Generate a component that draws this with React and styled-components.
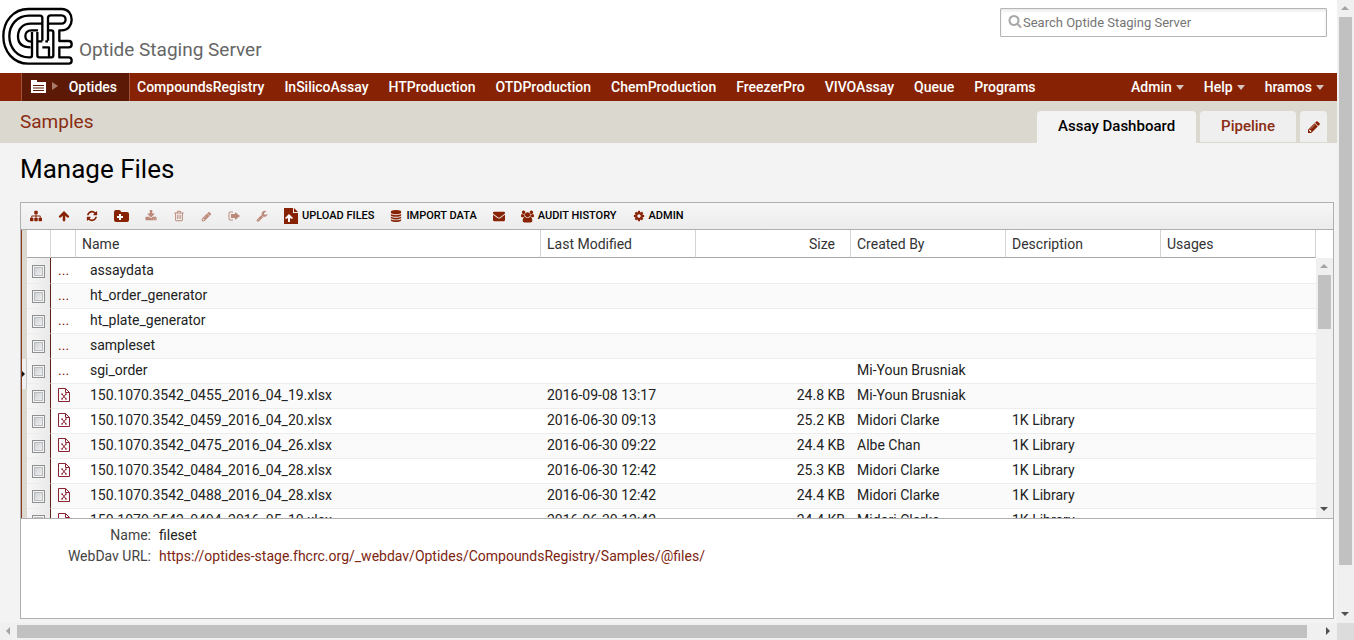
import React from "react";
import styled, { createGlobalStyle } from "styled-components";

const brand = "#872304";
const line = "#b0b0b0";

const GlobalStyle = createGlobalStyle`
  * { box-sizing: border-box; }
  body { margin: 0; font: 14px/20px Roboto, "Liberation Sans", sans-serif; color: #222; background: #f3f3f3; }
  button, input { font: inherit; }
  a { text-decoration: none; }
`;

const Window = styled.div`
  display: grid;
  grid-template-columns: minmax(0, 1fr) 17px;
  grid-template-rows: minmax(0, 1fr) 17px;
  height: 100vh;
`;
const Page = styled.div`
  display: flex;
  flex-direction: column;
  min-width: 0;
  overflow: hidden;
`;

/* Scroll bars */
const Scroll = styled.div`
  display: flex;
  flex-direction: ${p => (p.$across ? "row" : "column")};
  background: #f0f0f0;
  min-height: 0;
`;
const ScrollArrow = styled.span`
  flex: 0 0 17px;
  display: grid;
  place-items: center;
  color: ${p => (p.$dim ? "#a3a3a3" : "#505050")};
`;
const Track = styled.div`
  flex: 1;
  display: flex;
  flex-direction: ${p => (p.$across ? "row" : "column")};
  padding: ${p => (p.$across ? "2px 0" : "0 2px")};
  min-height: 0;
`;
const Thumb = styled.div`
  flex: 0 0 ${p => p.$size};
  background: #c1c1c1;
`;
const Corner = styled.div`
  background: #dcdcdc;
`;

/* Masthead */
const Masthead = styled.header`
  display: flex;
  flex: 0 0 73px;
  justify-content: space-between;
  background: #fff;
  padding: 4px 10px 0 0;
`;
const HomeLink = styled.a`
  display: flex;
  gap: 1px;
  color: #666;
  font-size: 19px;
  line-height: 24px;
`;
const HomeName = styled.span`
  padding-top: 34px;
`;
const SearchBox = styled.label`
  display: flex;
  align-items: center;
  width: 327px;
  height: 29px;
  margin-top: 4px;
  padding-left: 7px;
  gap: 1px;
  border: 1px solid #b5b5b5;
  border-radius: 1px;
  box-shadow: inset 0 2px 3px #e9e9e9;
  color: #a8a8a8;
  svg { flex: none; margin-bottom: 3px; }
`;
const SearchInput = styled.input`
  flex: 1;
  min-width: 0;
  border: 0;
  padding: 0;
  outline: 0;
  background: none;
  font-size: 13px;
  &::placeholder { color: #757575; opacity: 1; }
`;

/* Menu bar */
const MenuBar = styled.nav`
  display: flex;
  flex: 0 0 28px;
  background: ${brand};
  padding: 0 3px 0 21px;
`;
const Project = styled.a`
  display: flex;
  align-items: center;
  width: 109px;
  padding: 0 12px 0 9px;
  background: #5c1a06;
  border: solid #a0543c;
  border-width: 0 1px;
  color: #fff;
  font-weight: 500;
  svg { flex: none; margin-right: 6px; margin-bottom: 2px; }
  svg + svg { color: #a97b6c; margin-right: 0; }
  span { margin-left: auto; }
`;
const MenuLink = styled.a`
  padding: 4px 10px;
  color: #fff;
  font-weight: 500;
  white-space: nowrap;
`;
const MenuGroup = styled.div`
  display: flex;
  flex: 1;
  margin-left: -3px;
`;
const UserGroup = styled.div`
  display: flex;
`;
const Caret = styled.span`
  display: inline-block;
  margin-left: 4px;
  vertical-align: 2px;
  border: 4px solid transparent;
  border-top: 5px solid #d6c5c0;
  border-bottom: 0;
`;

/* Folder bar */
const FolderBar = styled.div`
  display: flex;
  flex: 0 0 42px;
  justify-content: space-between;
  background: #dbd8d0;
  padding: 0 10px 0 20px;
`;
const FolderLink = styled.a`
  padding-top: 11px;
  color: #892c12;
  font-size: 19px;
`;
const Tabs = styled.div`
  display: flex;
  align-items: flex-end;
  gap: 4px;
`;
const Tab = styled.a`
  height: ${p => (p.$on ? 32 : 31)}px;
  padding: 5px 21px;
  margin-bottom: ${p => (p.$on ? 0 : 1)}px;
  border-radius: 4px 4px 0 0;
  background: ${p => (p.$on ? "#f3f3f3" : "#efefef")};
  color: ${p => (p.$on ? "#000" : "#892c12")};
  font-size: 15px;
  font-weight: 500;
`;
const EditTab = styled.button`
  height: 31px;
  width: 27px;
  margin-bottom: 1px;
  padding: 0;
  border: 0;
  border-radius: 4px 4px 0 0;
  background: #efefef;
  color: ${brand};
  display: grid;
  place-items: center;
`;

/* File browser */
const Title = styled.h1`
  margin: 0;
  padding: 10px 20px 0;
  flex: 0 0 59px;
  font-size: 26px;
  line-height: 32px;
  font-weight: 400;
  color: #000;
`;
const Panel = styled.main`
  display: flex;
  flex: 1;
  flex-direction: column;
  min-height: 0;
  margin: 0 3px 4px 20px;
  border: 1px solid ${line};
  background: #fff;
`;
const Toolbar = styled.div`
  display: flex;
  flex: 0 0 27px;
  padding-left: 1px;
  border-bottom: 1px solid ${line};
  background: linear-gradient(#f6f6f6, #ececec);
`;
const Tool = styled.button`
  display: flex;
  align-items: center;
  gap: 4px;
  padding: 0 8px;
  border: 0;
  background: none;
  color: ${brand};
  opacity: ${p => (p.disabled ? 0.5 : 1)};
  svg { flex: none; }
`;
const ToolText = styled.span`
  color: #000;
  font-size: 11px;
  font-weight: 500;
  text-transform: uppercase;
  white-space: nowrap;
`;
const Browser = styled.div`
  display: grid;
  grid-template-columns: 6px minmax(0, 1fr) 17px;
  flex: 1;
  min-height: 0;
  overflow: hidden;
`;
const Splitter = styled.div`
  display: flex;
  align-items: center;
  background: #dbd8d0;
  border-left: 1px solid #8c3b21;
`;
const Expand = styled.button`
  width: 5px;
  height: 30px;
  padding: 0;
  border: 1px solid #c9c7c3;
  border-width: 0 1px 0 0;
  background: #f0f0f0;
  color: #111;
  display: grid;
  place-items: center;
`;
const GridClip = styled.div`
  overflow: hidden;
`;
const GridScroll = styled.div`
  display: grid;
  grid-template-rows: 28px minmax(0, 1fr);
`;
const Files = styled.table`
  width: 100%;
  table-layout: fixed;
  border-collapse: separate;
  border-spacing: 0;
`;
const Col = styled.col`
  width: ${p => p.$w};
`;
const Head = styled.th`
  height: 28px;
  padding: 0 ${p => (p.$right ? 15 : 6)}px 0 6px;
  border-right: 1px solid #d5d5d5;
  border-bottom: 1px solid #a8a8a8;
  font-weight: 400;
  text-align: ${p => (p.$right ? "right" : "left")};
  color: #333;
`;
const Row = styled.tr`
  background: ${p => (p.$alt ? "#fafafa" : "#fff")};
`;
const Cell = styled.td`
  height: 25px;
  padding: 1px 6px 0;
  border-bottom: 1px solid #ededed;
  white-space: nowrap;
  vertical-align: top;
  text-align: ${p => (p.$right ? "right" : "left")};
  tr:first-child > & { height: 26px; padding-top: 2px; }
`;
const NameCell = styled(Cell)`
  padding-left: 14px;
`;
const KindCell = styled(Cell)`
  padding-left: 7px;
  color: ${brand};
  svg { display: block; margin-top: 3px; }
`;
const CheckCell = styled(Cell)`
  padding-left: 5px;
  padding-right: 0;
  border-right: 1px solid #5b2416;
  background: linear-gradient(90deg, #f7f7f7, #e9e9e9);
`;
const Check = styled.input`
  appearance: none;
  display: block;
  width: 13px;
  height: 13px;
  margin: 5px 0 0;
  border: 1px solid #8e8f8f;
  background: linear-gradient(135deg, #c6cace, #f6f6f6);
  box-shadow: inset 0 0 0 1px #f4f4f4, inset 0 0 0 2px #b9bcc0;
`;
const Details = styled.dl`
  display: grid;
  grid-template-columns: 130px 1fr;
  grid-auto-rows: 21px;
  column-gap: 8px;
  flex: 0 0 100px;
  margin: 0;
  padding-top: 6px;
  border-top: 1px solid ${line};
`;
const Term = styled.dt`
  text-align: right;
  color: #444;
`;
const Value = styled.dd`
  margin: 0;
  a { color: #7d2410; }
`;

/* Icons */
const paths = {
  arrowUp: "M1675 971q0 51-37 90l-75 75q-38 38-91 38-54 0-90-38l-294-293v704q0 52-37.5 84.5t-90.5 32.5h-128q-53 0-90.5-32.5t-37.5-84.5v-704l-294 293q-36 38-90 38t-90-38l-75-75q-38-38-38-90 0-53 38-91l651-651q35-37 90-37 54 0 91 37l651 651q37 39 37 91z",
  refresh: "M1639 1056q0 5-1 7-64 268-268 434.5t-478 166.5q-146 0-282.5-55t-243.5-157l-129 129q-19 19-45 19t-45-19-19-45v-448q0-26 19-45t45-19h448q26 0 45 19t19 45-19 45l-137 137q71 66 161 102t187 36q134 0 250-65t186-179q11-17 53-117 8-23 30-23h192q13 0 22.5 9.5t9.5 22.5zm25-800v448q0 26-19 45t-45 19h-448q-26 0-45-19t-19-45 19-45l138-138q-148-137-349-137-134 0-250 65t-186 179q-11 17-53 117-8 23-30 23h-199q-13 0-22.5-9.5t-9.5-22.5v-7q65-268 270-434.5t480-166.5q146 0 284 55.5t245 156.5l130-129q19-19 45-19t45 19 19 45z",
  search: "M1216 832q0-185-131.5-316.5t-316.5-131.5-316.5 131.5-131.5 316.5 131.5 316.5 316.5 131.5 316.5-131.5 131.5-316.5zm512 832q0 52-38 90t-90 38q-54 0-90-38l-343-342q-179 124-399 124-143 0-273.5-55.5t-225-150-150-225-55.5-273.5 55.5-273.5 150-225 225-150 273.5-55.5 273.5 55.5 225 150 150 225 55.5 273.5q0 220-124 399l343 343q37 37 37 90z",
  pencil: "M491 1536l91-91-235-235-91 91v107h128v128h107zm523-928q0-22-22-22-10 0-17 7l-542 542q-7 7-7 17 0 22 22 22 10 0 17-7l542-542q7-7 7-17zm-54-192l416 416-832 832h-416v-416zm683 96q0 53-37 90l-166 166-416-416 166-165q36-38 90-38 53 0 91 38l235 234q37 39 37 91z",
  envelope: "M1792 710v794q0 66-47 113t-113 47h-1472q-66 0-113-47t-47-113v-794q44 49 101 87 362 246 497 345 57 42 92.5 65.5t94.5 48 110 24.5h2q51 0 110-24.5t94.5-48 92.5-65.5q170-123 498-345 57-39 100-87zm0-294q0 79-49 151t-122 123q-376 261-468 325-10 7-42.5 31t-54 38.5-52 32.5-57.5 27-50 9h-2q-23 0-50-9t-57.5-27-52-32.5-54-38.5-42.5-31q-91-64-262-182.5t-205-142.5q-62-42-117-115.5t-55-136.5q0-78 41.5-130t118.5-52h1472q65 0 112.5 47t47.5 113z",
  download: "M1344 1344q0-26-19-45t-45-19-45 19-19 45 19 45 45 19 45-19 19-45zm256 0q0-26-19-45t-45-19-45 19-19 45 19 45 45 19 45-19 19-45zm128-224v320q0 40-28 68t-68 28h-1472q-40 0-68-28t-28-68v-320q0-40 28-68t68-28h465l135 136q58 56 136 56t136-56l136-136h464q40 0 68 28t28 68zm-325-569q17 41-14 70l-448 448q-18 19-45 19t-45-19l-448-448q-31-29-14-70 17-39 59-39h256v-448q0-26 19-45t45-19h256q26 0 45 19t19 45v448h256q42 0 59 39z",
  trash: "M704 736v576q0 14-9 23t-23 9h-64q-14 0-23-9t-9-23v-576q0-14 9-23t23-9h64q14 0 23 9t9 23zm256 0v576q0 14-9 23t-23 9h-64q-14 0-23-9t-9-23v-576q0-14 9-23t23-9h64q14 0 23 9t9 23zm256 0v576q0 14-9 23t-23 9h-64q-14 0-23-9t-9-23v-576q0-14 9-23t23-9h64q14 0 23 9t9 23zm128 724v-948h-896v948q0 22 7 40.5t14.5 27 10.5 8.5h832q3 0 10.5-8.5t14.5-27 7-40.5zm-672-1076h448l-48-117q-7-9-17-11h-317q-10 2-17 11zm928 32v64q0 14-9 23t-23 9h-96v948q0 83-47 143.5t-113 60.5h-832q-66 0-113-58.5t-47-141.5v-952h-96q-14 0-23-9t-9-23v-64q0-14 9-23t23-9h309l70-167q15-37 54-63t79-26h320q40 0 79 26t54 63l70 167h309q14 0 23 9t9 23z",
  sitemap: "M1792 1248v320q0 40-28 68t-68 28h-320q-40 0-68-28t-28-68v-320q0-40 28-68t68-28h96v-192h-512v192h96q40 0 68 28t28 68v320q0 40-28 68t-68 28h-320q-40 0-68-28t-28-68v-320q0-40 28-68t68-28h96v-192h-512v192h96q40 0 68 28t28 68v320q0 40-28 68t-68 28h-320q-40 0-68-28t-28-68v-320q0-40 28-68t68-28h96v-192q0-52 38-90t90-38h512v-192h-96q-40 0-68-28t-28-68v-320q0-40 28-68t68-28h320q40 0 68 28t28 68v320q0 40-28 68t-68 28h-96v192h512q52 0 90 38t38 90v192h96q40 0 68 28t28 68z",
  wrench: "M448 1472q0-26-19-45t-45-19-45 19-19 45 19 45 45 19 45-19 19-45zm644-420l-682 682q-37 37-90 37-52 0-91-37l-106-108q-38-36-38-90 0-53 38-91l681-681q39 98 114.5 173.5t173.5 114.5zm634-435q0 39-23 106-47 134-164.5 217.5t-258.5 83.5q-185 0-316.5-131.5t-131.5-316.5 131.5-316.5 316.5-131.5q58 0 121.5 16.5t107.5 46.5q16 11 16 28t-16 28l-293 169v224l193 107q5-3 79-48.5t135.5-81 70.5-35.5q15 0 23.5 10t8.5 25z",
  cog: "M1152 896q0-106-75-181t-181-75-181 75-75 181 75 181 181 75 181-75 75-181zm512-109v222q0 12-8 23t-20 13l-185 28q-19 54-39 91 35 50 107 138 10 12 10 25t-9 23q-27 37-99 108t-94 71q-12 0-26-9l-138-108q-44 23-91 38-16 136-29 186-7 28-36 28h-222q-14 0-24.5-8.5t-11.5-21.5l-28-184q-49-16-90-37l-141 107q-10 9-25 9-14 0-25-11-126-114-165-168-7-10-7-23 0-12 8-23 15-21 51-66.5t54-70.5q-27-50-41-99l-183-27q-13-2-21-12.5t-8-23.5v-222q0-12 8-23t19-13l186-28q14-46 39-92-40-57-107-138-10-12-10-24 0-10 9-23 26-36 98.5-107.5t94.5-71.5q13 0 26 10l138 107q44-23 91-38 16-136 29-186 7-28 36-28h222q14 0 24.5 8.5t11.5 21.5l28 184q49 16 90 37l142-107q9-9 24-9 13 0 25 10 129 119 165 170 7 8 7 22 0 12-8 23-15 21-51 66.5t-54 70.5q26 50 41 98l183 28q13 2 21 12.5t8 23.5z",
  database: "M896 768q237 0 443-43t325-127v170q0 69-103 128t-280 93.5-385 34.5-385-34.5-280-93.5-103-128v-170q119 84 325 127t443 43zm0 768q237 0 443-43t325-127v170q0 69-103 128t-280 93.5-385 34.5-385-34.5-280-93.5-103-128v-170q119 84 325 127t443 43zm0-384q237 0 443-43t325-127v170q0 69-103 128t-280 93.5-385 34.5-385-34.5-280-93.5-103-128v-170q119 84 325 127t443 43zm0-1152q208 0 385 34.5t280 93.5 103 128v128q0 69-103 128t-280 93.5-385 34.5-385-34.5-280-93.5-103-128v-128q0-69 103-128t280-93.5 385-34.5z",
  users: "M593 896q-162 5-265 128h-134q-82 0-138-40.5t-56-118.5q0-353 124-353 6 0 43.5 21t97.5 42.5 119 21.5q67 0 133-23-5 37-5 66 0 139 81 256zm1071 637q0 120-73 189.5t-194 69.5h-874q-121 0-194-69.5t-73-189.5q0-53 3.5-103.5t14-109 26.5-108.5 43-97.5 62-81 85.5-53.5 111.5-20q10 0 43 21.5t73 48 107 48 135 21.5 135-21.5 107-48 73-48 43-21.5q61 0 111.5 20t85.5 53.5 62 81 43 97.5 26.5 108.5 14 109 3.500 103.500zm-1024-1277q0 106-75 181t-181 75-181-75-75-181 75-181 181-75 181 75 75 181zm704 384q0 159-112.5 271.5t-271.5 112.5-271.5-112.5-112.5-271.5 112.5-271.5 271.5-112.5 271.5 112.5 112.5 271.5zm576 225q0 78-56 118.5t-138 40.5h-134q-103-123-265-128 81-117 81-256 0-29-5-66 66 23 133 23 59 0 119-21.5t97.5-42.5 43.5-21q124 0 124 353zm-128-609q0 106-75 181t-181 75-181-75-75-181 75-181 181-75 181 75 75 181z",
};
const Glyph = ({ name, size = 12, box = 1792 }) => (
  <svg width={size} height={size} viewBox={`0 0 ${box} 1792`} fill="currentColor" aria-hidden="true">
    <path d={paths[name]} />
  </svg>
);
const Triangle = ({ dir }) => {
  const d = { up: "M3 9 7 5l4 4z", down: "M3 5h8L7 9z", left: "M9 3v8L5 7z", right: "M5 3v8l4-4z" }[dir];
  return <svg width="15" height="15" viewBox="0 0 15 15" fill="currentColor" aria-hidden="true"><path d={d} /></svg>;
};
const FolderPlus = () => (
  <svg width="15" height="12" viewBox="0 0 15 12" aria-hidden="true">
    <path fill="currentColor" d="M0 2q0-2 2-2h3q2 0 2 2h6q2 0 2 2v6q0 2-2 2H2q-2 0-2-2z" />
    <path fill="#fff" d="M5 4h2v2h2v2H7v2H5V8H3V6h2z" />
  </svg>
);
const ExportIcon = () => (
  <svg width="12" height="12" viewBox="0 0 12 12" aria-hidden="true">
    <path fill="none" stroke="currentColor" d="M5 2H2Q1 2 1 3v6q0 1 1 1h3" />
    <path fill="currentColor" d="M3 4h4V2l5 4-5 4V8H3z" />
  </svg>
);
const UploadIcon = () => (
  <svg width="14" height="16" viewBox="0 0 14 16" aria-hidden="true">
    <path fill="currentColor" d="M0 0h9v5h5v11H0zM10 0l4 4h-4z" />
    <path fill="#fff" d="M5 6l4 4-1 1-2-1v4H4v-4l-2 1-1-1z" />
  </svg>
);
const FolderMenuIcon = () => (
  <svg width="15" height="13" viewBox="0 0 15 13" aria-hidden="true">
    <path fill="#fff" d="M0 0h6v2h9v11H0z" />
    <path stroke="#5c1a06" d="M2 5.5h11M2 8h11M2 10.5h11" />
  </svg>
);
const SheetIcon = () => (
  <svg width="12" height="14" viewBox="0 0 12 14" fill="none" stroke="#8a2230" aria-hidden="true">
    <path d="M.5.5h7l4 4v9H.5zM7.5.5v4h4" />
    <path d="M4 6l4 5M8 6l-4 5M3 6h2M7 6h2M3 11h2M7 11h2" />
  </svg>
);
const Logo = () => (
  <svg width="78" height="64" viewBox="0 0 234 192" fill="none" stroke="#000" strokeWidth="7" strokeLinejoin="round" aria-hidden="true">
    <path d="M185 15H85C40 15 10 52 10 97s30 82 75 82h121c12 0 12-19 0-19h-28v-30h28c12 0 12-19 0-19h-28V79h7c40 0 40-64 0-64z" />
    <path d="M127 110V42q0-7-7-7H87C52 35 28 62 28 97s24 63 59 63h3q6 0 6-6V84" />
    <path d="M144 110V42q0-8 8-8h32c17 0 17 25 0 25h-40M127 59H92c-24 0-38 16-38 38s12 33 38 33" />
    <path d="M114 79H94c-24 0-24 34 0 34M112 84v70q0 6 6 6h36q6 0 6-6V85q0-6-6-6h-8M112 112h15M144 112h-8M127 130h20v30" />
  </svg>
);

const ScrollBar = ({ across, size }) => (
  <Scroll $across={across}>
    <ScrollArrow $dim><Triangle dir={across ? "left" : "up"} /></ScrollArrow>
    <Track $across={across}><Thumb $size={size} /></Track>
    <ScrollArrow><Triangle dir={across ? "right" : "down"} /></ScrollArrow>
  </Scroll>
);

const folders = ["CompoundsRegistry", "InSilicoAssay", "HTProduction", "OTDProduction", "ChemProduction", "FreezerPro", "VIVOAssay", "Queue", "Programs"];
const tools = [
  { label: "Folder tree", icon: <Glyph name="sitemap" /> },
  { label: "Parent folder", icon: <Glyph name="arrowUp" /> },
  { label: "Refresh", icon: <Glyph name="refresh" /> },
  { label: "Create folder", icon: <FolderPlus /> },
  { label: "Download", icon: <Glyph name="download" />, off: true },
  { label: "Delete", icon: <Glyph name="trash" />, off: true },
  { label: "Rename", icon: <Glyph name="pencil" size={11} />, off: true },
  { label: "Move", icon: <ExportIcon />, off: true },
  { label: "Edit properties", icon: <Glyph name="wrench" />, off: true },
  { text: "Upload Files", icon: <UploadIcon /> },
  { text: "Import Data", icon: <Glyph name="database" /> },
  { label: "Email preferences", icon: <Glyph name="envelope" /> },
  { text: "Audit History", icon: <Glyph name="users" size={13} box={1920} /> },
  { text: "Admin", icon: <Glyph name="cog" /> },
];
const files = [
  ["assaydata"],
  ["ht_order_generator"],
  ["ht_plate_generator"],
  ["sampleset"],
  ["sgi_order", "", "", "Mi-Youn Brusniak"],
  ["150.1070.3542_0455_2016_04_19.xlsx", "2016-09-08 13:17", "24.8 KB", "Mi-Youn Brusniak"],
  ["150.1070.3542_0459_2016_04_20.xlsx", "2016-06-30 09:13", "25.2 KB", "Midori Clarke", "1K Library"],
  ["150.1070.3542_0475_2016_04_26.xlsx", "2016-06-30 09:22", "24.4 KB", "Albe Chan", "1K Library"],
  ["150.1070.3542_0484_2016_04_28.xlsx", "2016-06-30 12:42", "25.3 KB", "Midori Clarke", "1K Library"],
  ["150.1070.3542_0488_2016_04_28.xlsx", "2016-06-30 12:42", "24.4 KB", "Midori Clarke", "1K Library"],
  ["150.1070.3542_0494_2016_05_10.xlsx", "2016-06-30 12:42", "24.4 KB", "Midori Clarke", "1K Library"],
];

const FileRow = ({ file: [name, modified, size, author, description], alt }) => (
  <Row $alt={alt}>
    <CheckCell><Check type="checkbox" aria-label={`Select ${name}`} /></CheckCell>
    <KindCell>{size ? <SheetIcon /> : "..."}</KindCell>
    <NameCell>{name}</NameCell>
    <Cell>{modified}</Cell>
    <Cell $right>{size}</Cell>
    <Cell>{author}</Cell>
    <Cell>{description}</Cell>
    <Cell />
  </Row>
);

export default function App() {
  return (
    <Window>
      <GlobalStyle />
      <Page>
        <Masthead>
          <HomeLink href="#home"><Logo /><HomeName>Optide Staging Server</HomeName></HomeLink>
          <SearchBox>
            <Glyph name="search" size={14} />
            <SearchInput type="text" aria-label="Search" placeholder="Search Optide Staging Server" />
          </SearchBox>
        </Masthead>
        <MenuBar>
          <Project href="#project"><FolderMenuIcon />
            <svg width="6" height="8" viewBox="0 0 6 8" aria-hidden="true"><path fill="currentColor" d="M0 0l6 4-6 4z" /></svg>
            <span>Optides</span>
          </Project>
          <MenuGroup>
            {folders.map(f => <MenuLink key={f} href={`#${f}`}>{f}</MenuLink>)}
          </MenuGroup>
          <UserGroup>
            {["Admin", "Help", "hramos"].map(m => <MenuLink key={m} href={`#${m}`}>{m}<Caret /></MenuLink>)}
          </UserGroup>
        </MenuBar>
        <FolderBar>
          <FolderLink href="#samples">Samples</FolderLink>
          <Tabs>
            <Tab $on href="#dashboard">Assay Dashboard</Tab>
            <Tab href="#pipeline">Pipeline</Tab>
            <EditTab aria-label="Edit tabs"><Glyph name="pencil" size={14} /></EditTab>
          </Tabs>
        </FolderBar>
        <Title>Manage Files</Title>
        <Panel>
          <Toolbar>
            {tools.map(t => (
              <Tool key={t.text || t.label} disabled={t.off} aria-label={t.label}>
                {t.icon}{t.text && <ToolText>{t.text}</ToolText>}
              </Tool>
            ))}
          </Toolbar>
          <Browser>
            <Splitter>
              <Expand aria-label="Show folder tree">
                <svg width="4" height="6" viewBox="0 0 4 6" aria-hidden="true"><path fill="currentColor" d="M0 0l3 3-3 3z" /></svg>
              </Expand>
            </Splitter>
            <GridClip>
              <Files>
                <colgroup>
                  <Col $w="24px" /><Col $w="25px" /><Col $w="auto" />
                  <Col $w="155px" /><Col $w="155px" /><Col $w="155px" /><Col $w="155px" /><Col $w="155px" />
                </colgroup>
                <thead>
                  <tr>
                    <Head aria-label="Select" /><Head aria-label="Type" />
                    <Head>Name</Head><Head>Last Modified</Head><Head $right>Size</Head>
                    <Head>Created By</Head><Head>Description</Head><Head>Usages</Head>
                  </tr>
                </thead>
                <tbody>
                  {files.map((f, i) => <FileRow key={f[0]} file={f} alt={i % 2 === 1} />)}
                </tbody>
              </Files>
            </GridClip>
            <GridScroll><span /><ScrollBar size="24%" /></GridScroll>
          </Browser>
          <Details>
            <Term>Name:</Term><Value>fileset</Value>
            <Term>WebDav URL:</Term>
            <Value><a href="#webdav">https://optides-stage.fhcrc.org/_webdav/Optides/CompoundsRegistry/Samples/@files/</a></Value>
          </Details>
        </Panel>
      </Page>
      <ScrollBar size="93%" />
      <ScrollBar across size="99%" />
      <Corner />
    </Window>
  );
}
